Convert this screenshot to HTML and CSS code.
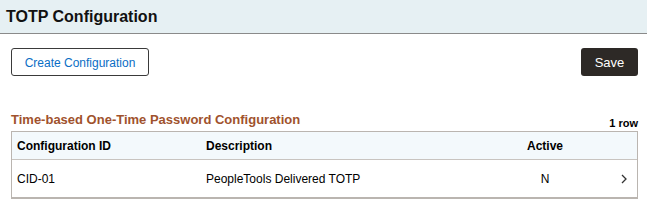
FILE: index.html
```html
<!DOCTYPE html>
<html lang="en">
<head>
    <meta charset="UTF-8" />
    <title>TOTP Configuration</title>
    <link rel="stylesheet" href="styles.css">
</head>
<body>
    <div class="page-header">
        <h1>TOTP Configuration</h1>
    </div>
    <div class="toolbar">
        <button class="btn-outline">Create Configuration</button>
        <button class="btn-primary">Save</button>
    </div>
    <div class="grid-section">
        <div class="grid-title">
            <h2>Time-based One-Time Password Configuration</h2>
            <span class="row-count">1 row</span>
        </div>
        <div class="grid">
            <div class="grid-row head">
                <div class="cell">Configuration ID</div>
                <div class="cell">Description</div>
                <div class="cell center">Active</div>
                <div class="cell"></div>
            </div>
            <div class="grid-row">
                <div class="cell">CID-01</div>
                <div class="cell">PeopleTools Delivered TOTP</div>
                <div class="cell center">N</div>
                <div class="cell chevron">
                    <svg width="8" height="12" viewBox="0 0 8 12"><path d="M2 2 L6 6 L2 10" fill="none" stroke="#333" stroke-width="1.3"/></svg>
                </div>
            </div>
        </div>
    </div>
</body>
</html>
```
FILE: styles.css
```css
body {
    margin: 0;
    font-family: "Liberation Sans", Arial, sans-serif;
    background: #fff;
    color: #000;
}
.page-header {
    background: #e6f0f3;
    border-bottom: 1px solid #8a8a8a;
    height: 33px;
    padding: 0 6px;
    display: flex;
    align-items: center;
}
.page-header h1 {
    margin: 0;
    font-size: 16px;
    font-weight: bold;
    color: #111;
}
.toolbar {
    display: flex;
    justify-content: space-between;
    padding: 14px 9px 0 11px;
}
button {
    font-family: inherit;
    font-size: 12px;
    cursor: pointer;
}
.btn-outline {
    width: 138px;
    height: 28px;
    padding-top: 2px;
    background: #fff;
    color: #0a6ec5;
    border: 1px solid #3a3a3a;
    border-radius: 3px;
}
.btn-primary {
    width: 57px;
    height: 28px;
    background: #2d2926;
    color: #fff;
    border: none;
    border-radius: 3px;
    font-size: 13px;
}
.grid-section {
    padding: 33px 9px 0 11px;
}
.grid-title {
    display: flex;
    justify-content: space-between;
    align-items: flex-end;
    height: 22px;
}
.grid-title h2 {
    margin: 0 0 3px;
    font-size: 13px;
    font-weight: bold;
    color: #a0522d;
    line-height: 16px;
}
.row-count {
    font-size: 11px;
    font-weight: bold;
    line-height: 13px;
    padding-bottom: 1px;
}
.grid {
    border: 1px solid #bab5b0;
    border-bottom-width: 2px;
}
.grid-row {
    display: grid;
    grid-template-columns: 189px 304px 80px 1fr;
    align-items: center;
    height: 37px;
    font-size: 12px;
}
.grid-row.head {
    height: 27px;
    background: #f3f9fc;
    font-weight: bold;
    border-bottom: 1px solid #c8c4c0;
}
.cell {
    padding-left: 5px;
}
.cell.center {
    text-align: center;
    padding-left: 0;
}
.chevron {
    text-align: right;
    padding-right: 9px;
    padding-top: 3px;
}
```
